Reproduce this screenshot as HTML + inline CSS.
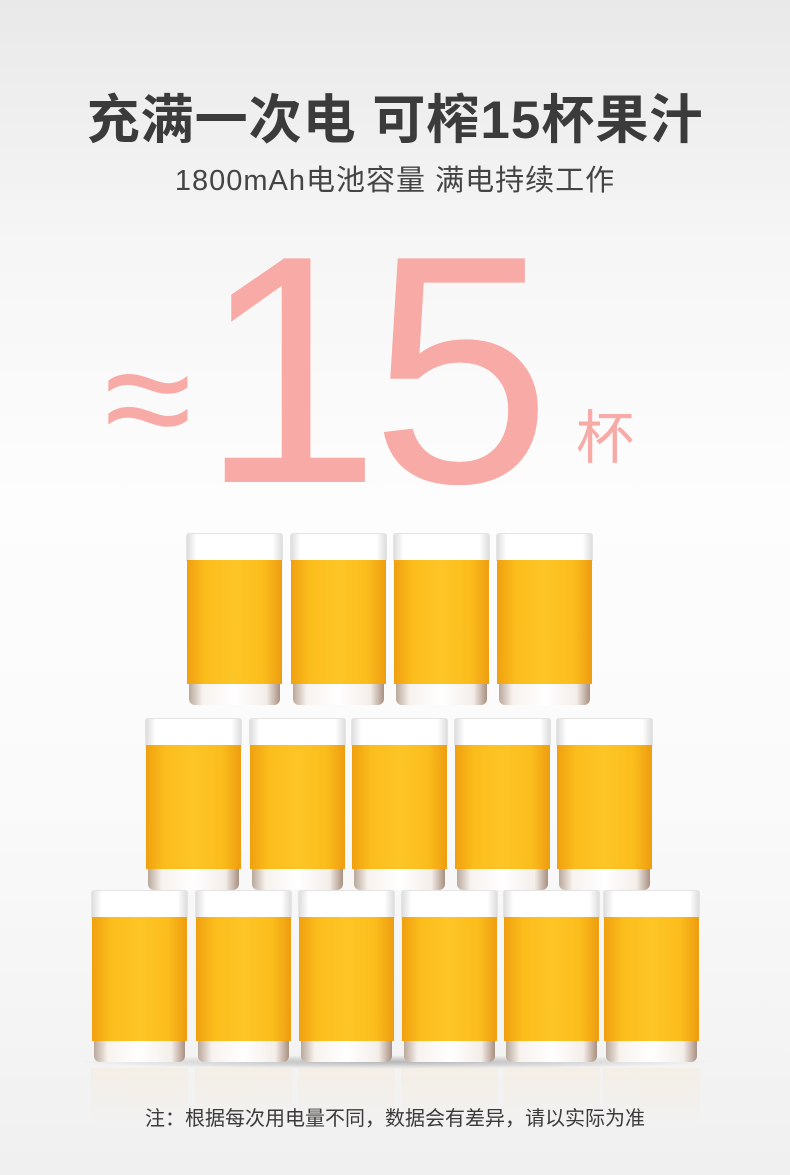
<!DOCTYPE html>
<html><head><meta charset="utf-8"><style>
*{margin:0;padding:0;box-sizing:border-box}
body{width:790px;height:1175px;overflow:hidden;position:relative;font-family:"Liberation Sans","Noto Sans CJK SC",sans-serif;
background:linear-gradient(#e9e9e9 0px,#f6f6f6 250px,#fdfdfd 500px,#fafafa 800px,#f0f0f0 1175px)}
.t{position:absolute;left:0;width:790px;text-align:center}
.g{position:absolute;width:97px;height:172px}
.g .rim{position:absolute;left:0;right:0;top:0;height:28px;background:linear-gradient(90deg,#ddd,#fff 10%,#fff 90%,#ddd);border:1px solid #e4e4e4;border-bottom:none;border-radius:3px 3px 0 0}
.g .j{position:absolute;left:1px;right:1px;top:27px;height:124px;background:linear-gradient(90deg,#f0a010,#fbbd1c 20%,#fdc526 50%,#fbbd1c 80%,#ee9d10)}
.g .b{position:absolute;left:3px;right:3px;top:151px;height:21px;background:linear-gradient(90deg,#b9a89a,#f7f2ee 15%,#fff 50%,#f4eeea 85%,#a99080);border-radius:0 0 6px 6px}
.sh{position:absolute;left:70px;width:650px;top:1055px;height:14px;border-radius:50%;background:radial-gradient(ellipse,rgba(0,0,0,.25),rgba(0,0,0,0) 70%)}
.r{position:absolute;width:97px;height:55px;top:1068px;background:linear-gradient(rgba(245,230,205,.35),rgba(255,245,225,0))}
</style></head><body>
<div class="t" style="top:78px;font-size:53px;font-weight:bold;color:#3b3b3b;letter-spacing:1px">充满一次电 可榨15杯果汁</div>
<div class="t" style="top:157px;font-size:29px;color:#444;letter-spacing:1px">1800mAh电池容量 满电持续工作</div>
<div style="position:absolute;left:104px;top:318px;font-size:160px;color:#f7aaa6;line-height:1">≈</div>
<div style="position:absolute;left:200px;top:207px;font-size:325px;color:#f7aaa6;line-height:1;letter-spacing:-10px">15</div>
<div style="position:absolute;left:576px;top:410px;font-size:58px;color:#f7aaa6;line-height:1">杯</div>
<div class="sh"></div>
<div class="r" style="left:91px"></div><div class="r" style="left:195px"></div><div class="r" style="left:298px"></div><div class="r" style="left:401px"></div><div class="r" style="left:503px"></div><div class="r" style="left:603px"></div>

<div class="g" style="left:186px;top:533px"><div class="rim"></div><div class="j"></div><div class="b"></div></div>
<div class="g" style="left:290px;top:533px"><div class="rim"></div><div class="j"></div><div class="b"></div></div>
<div class="g" style="left:393px;top:533px"><div class="rim"></div><div class="j"></div><div class="b"></div></div>
<div class="g" style="left:496px;top:533px"><div class="rim"></div><div class="j"></div><div class="b"></div></div>

<div class="g" style="left:145px;top:718px"><div class="rim"></div><div class="j"></div><div class="b"></div></div>
<div class="g" style="left:249px;top:718px"><div class="rim"></div><div class="j"></div><div class="b"></div></div>
<div class="g" style="left:351px;top:718px"><div class="rim"></div><div class="j"></div><div class="b"></div></div>
<div class="g" style="left:454px;top:718px"><div class="rim"></div><div class="j"></div><div class="b"></div></div>
<div class="g" style="left:556px;top:718px"><div class="rim"></div><div class="j"></div><div class="b"></div></div>

<div class="g" style="left:91px;top:890px"><div class="rim"></div><div class="j"></div><div class="b"></div></div>
<div class="g" style="left:195px;top:890px"><div class="rim"></div><div class="j"></div><div class="b"></div></div>
<div class="g" style="left:298px;top:890px"><div class="rim"></div><div class="j"></div><div class="b"></div></div>
<div class="g" style="left:401px;top:890px"><div class="rim"></div><div class="j"></div><div class="b"></div></div>
<div class="g" style="left:503px;top:890px"><div class="rim"></div><div class="j"></div><div class="b"></div></div>
<div class="g" style="left:603px;top:890px"><div class="rim"></div><div class="j"></div><div class="b"></div></div>

<div class="t" style="top:1102px;font-size:20px;color:#3a3a3a">注：根据每次用电量不同，数据会有差异，请以实际为准</div>
</body></html>
